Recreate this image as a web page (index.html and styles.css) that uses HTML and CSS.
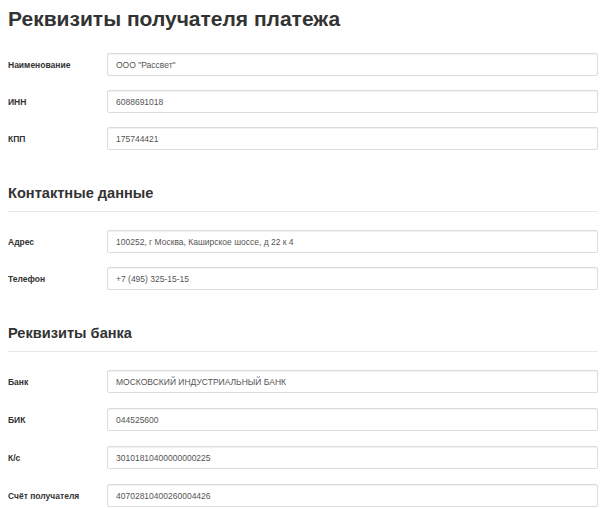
FILE: index.html
```html
<!DOCTYPE html>
<html lang="ru">
<head>
<meta charset="utf-8">
<title>Реквизиты получателя платежа</title>
<link rel="stylesheet" href="styles.css">
</head>
<body>
<main class="page">
  <h1 class="title">Реквизиты получателя платежа</h1>

  <section class="group">
    <div class="row"><label class="label">Наименование</label><div class="field">ООО "Рассвет"</div></div>
    <div class="row"><label class="label">ИНН</label><div class="field">6088691018</div></div>
    <div class="row"><label class="label">КПП</label><div class="field">175744421</div></div>
  </section>

  <h2 class="section-title">Контактные данные</h2>
  <section class="group">
    <div class="row"><label class="label">Адрес</label><div class="field">100252, г Москва, Каширское шоссе, д 22 к 4</div></div>
    <div class="row"><label class="label">Телефон</label><div class="field">+7 (495) 325-15-15</div></div>
  </section>

  <h2 class="section-title">Реквизиты банка</h2>
  <section class="group group-wide">
    <div class="row"><label class="label">Банк</label><div class="field">МОСКОВСКИЙ ИНДУСТРИАЛЬНЫЙ БАНК</div></div>
    <div class="row"><label class="label">БИК</label><div class="field">044525600</div></div>
    <div class="row"><label class="label">К/с</label><div class="field">30101810400000000225</div></div>
    <div class="row"><label class="label">Счёт получателя</label><div class="field">40702810400260004426</div></div>
  </section>
</main>
</body>
</html>
```

FILE: styles.css
```css
* { box-sizing: border-box; }
html, body { margin: 0; padding: 0; background: #fff; }
body {
  font-family: "Liberation Sans", Arial, Helvetica, sans-serif;
  color: #333;
}
.page {
  padding: 0 2px 0 8px;
  display: flex;
  flex-direction: column;
}
.title {
  margin: 6px 0 21px;
  font-size: 21px;
  line-height: 26px;
  font-weight: bold;
  color: #333;
}
.group {
  display: flex;
  flex-direction: column;
  gap: 14px;
}
.group-wide { gap: 15px; }
.section-title {
  margin: 33px 0 18px;
  padding-bottom: 8px;
  font-size: 14.6px;
  line-height: 20px;
  font-weight: bold;
  color: #333;
  border-bottom: 1px solid #e6e6e6;
}
.row {
  display: grid;
  grid-template-columns: 99px 1fr;
  align-items: center;
}
.label {
  font-size: 8.5px;
  font-weight: bold;
  color: #333;
}
.field {
  height: 23px;
  padding: 0 8px;
  display: flex;
  align-items: center;
  font-size: 8.5px;
  color: #555;
  border: 1px solid #dcdcdc;
  border-radius: 2px;
  box-shadow: inset 0 1px 1px rgba(0, 0, 0, 0.06);
  background: #fff;
}
```
